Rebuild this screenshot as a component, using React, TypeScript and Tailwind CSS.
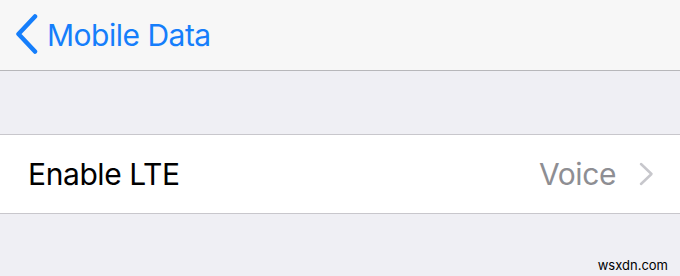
export default function App() {
  return (
    <div
      className="relative flex h-[276px] w-[680px] flex-col overflow-hidden bg-[#efeff4]"
      style={{ fontFamily: 'Inter, "Noto Sans", sans-serif' }}
    >
      <header className="flex h-[71px] items-center border-b border-[#b7b7ba] bg-[#f7f7f7] pl-[14px]">
        <svg width="24" height="40" viewBox="0 0 24 40" className="mb-[2px]">
          <path
            d="M21 2.5 L4.5 20 L21 37.5"
            fill="none"
            stroke="#157efb"
            strokeWidth="4.5"
            strokeLinecap="round"
            strokeLinejoin="round"
          />
        </svg>
        <span className="ml-[9px] text-[30px] leading-none tracking-[-0.5px] text-[#157efb]">
          Mobile Data
        </span>
      </header>
      <div className="h-[63px]" />
      <div className="flex h-[80px] items-center border-y border-[#c8c7cc] bg-white pl-[28px] pr-[26px]">
        <span className="flex-1 text-[30px] leading-none tracking-[-0.4px] text-black">
          Enable LTE
        </span>
        <span className="text-[30px] leading-none tracking-[-0.4px] text-[#8e8e93]">Voice</span>
        <svg width="16" height="24" viewBox="0 0 16 24" className="ml-[22px]">
          <path
            d="M3 2 L13.5 12 L3 22"
            fill="none"
            stroke="#c7c7cc"
            strokeWidth="2.5"
            strokeLinecap="round"
            strokeLinejoin="round"
          />
        </svg>
      </div>
      <div className="absolute bottom-[4px] right-[12px] text-[13px] leading-none text-black">
        wsxdn.com
      </div>
    </div>
  );
}
